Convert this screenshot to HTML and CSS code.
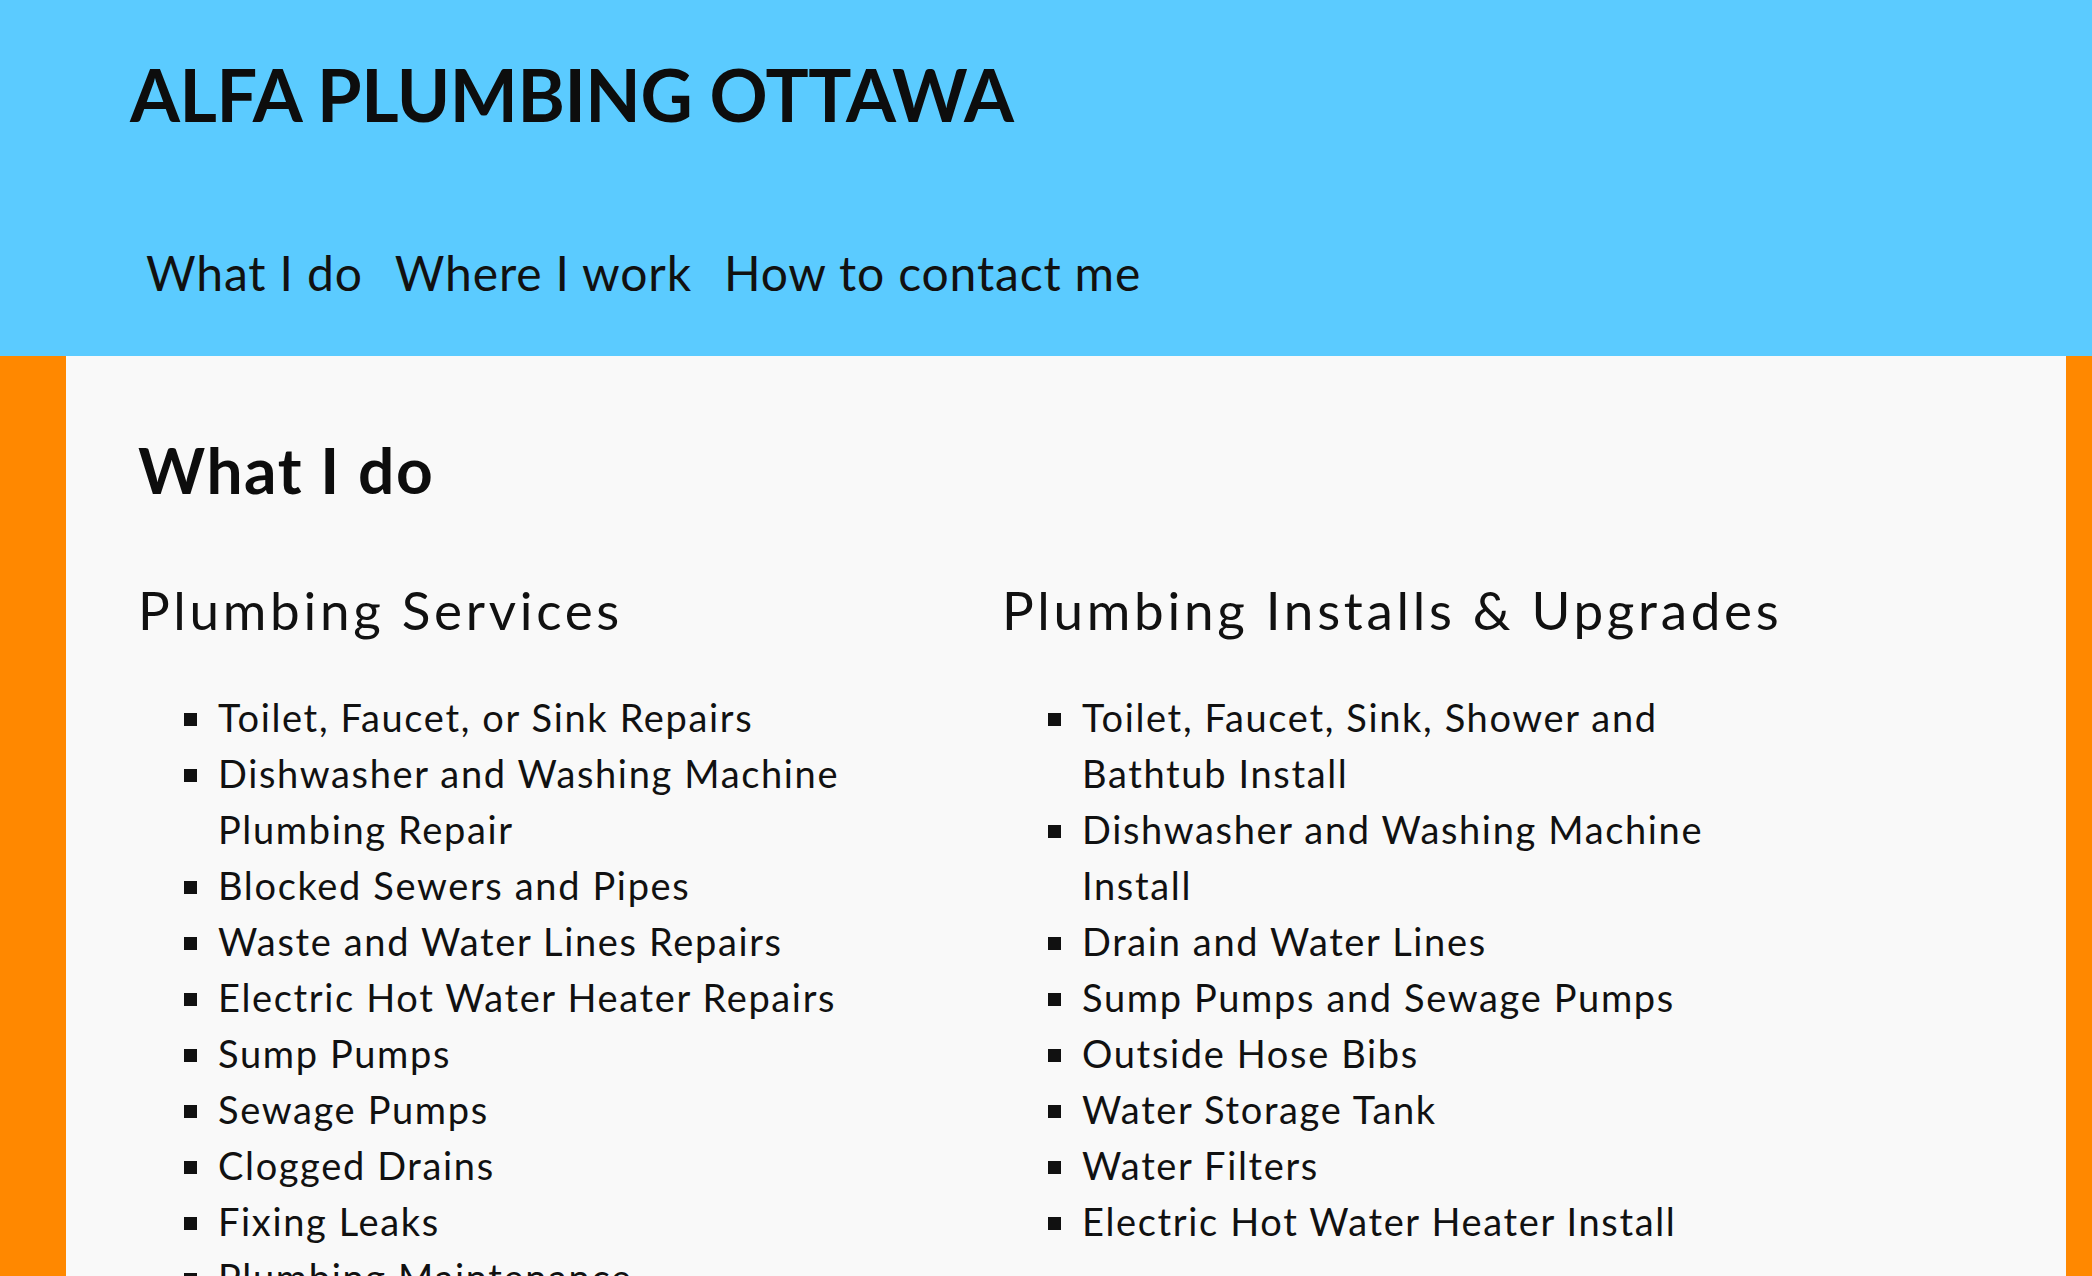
FILE: index.html
```html
<!DOCTYPE html>
<html lang="en">
<head>
<meta charset="utf-8">
<title>Alfa Plumbing Ottawa</title>
<link rel="stylesheet" href="styles.css">
</head>
<body>
<header class="site-header">
  <h1 class="site-title">ALFA PLUMBING OTTAWA</h1>
  <nav class="site-nav">
    <a class="nav-link" href="#what">What I do</a>
    <a class="nav-link" href="#where">Where I work</a>
    <a class="nav-link" href="#contact">How to contact me</a>
  </nav>
</header>
<main class="content">
  <section class="section" id="what">
    <h2 class="section-title">What I do</h2>
    <div class="columns">
      <div class="col">
        <h3 class="col-title">Plumbing Services</h3>
        <ul class="list">
          <li>Toilet, Faucet, or Sink Repairs</li>
          <li>Dishwasher and Washing Machine Plumbing Repair</li>
          <li>Blocked Sewers and Pipes</li>
          <li>Waste and Water Lines Repairs</li>
          <li>Electric Hot Water Heater Repairs</li>
          <li>Sump Pumps</li>
          <li>Sewage Pumps</li>
          <li>Clogged Drains</li>
          <li>Fixing Leaks</li>
          <li>Plumbing Maintenance</li>
        </ul>
      </div>
      <div class="col">
        <h3 class="col-title">Plumbing Installs &amp; Upgrades</h3>
        <ul class="list">
          <li>Toilet, Faucet, Sink, Shower and Bathtub Install</li>
          <li>Dishwasher and Washing Machine Install</li>
          <li>Drain and Water Lines</li>
          <li>Sump Pumps and Sewage Pumps</li>
          <li>Outside Hose Bibs</li>
          <li>Water Storage Tank</li>
          <li>Water Filters</li>
          <li>Electric Hot Water Heater Install</li>
        </ul>
      </div>
    </div>
  </section>
</main>
</body>
</html>
```
FILE: styles.css
```css
html, body {
  margin: 0;
  padding: 0;
}
body {
  background: #ff8800;
  font-family: Lato, "Open Sans", sans-serif;
  color: #111;
}
.site-header {
  background: #5bcbff;
  height: 356px;
  box-sizing: border-box;
  padding: 50px 0 0 130px;
}
.site-title {
  margin: 0;
  font-size: 72px;
  line-height: 88px;
  font-weight: 700;
  letter-spacing: -0.4px;
}
.site-title,
.section-title {
  color: #0d0d0d;
}
.site-nav {
  display: flex;
  gap: 32px;
  margin: 105px 0 0 16px;
}
.nav-link {
  color: #111;
  text-decoration: none;
  font-size: 48px;
  line-height: 60px;
  letter-spacing: 0.85px;
}
.content {
  margin-left: 66px;
  width: 2000px;
  background: #f9f9f9;
  min-height: 920px;
  box-sizing: border-box;
  padding: 74px 0 40px 72px;
}
.section-title {
  margin: 0;
  font-size: 64px;
  line-height: 80px;
  font-weight: 700;
  letter-spacing: 1.6px;
}
.columns {
  display: flex;
  gap: 74px;
  margin-top: 68px;
}
.col {
  width: 790px;
}
.col-title {
  margin: 0;
  font-size: 53px;
  line-height: 64px;
  font-weight: 400;
  letter-spacing: 3.7px;
}
.list {
  margin: 47px 0 0;
  padding-left: 78px;
  list-style: square;
  font-size: 38px;
  line-height: 56px;
  letter-spacing: 1.65px;
}
.list li {
  padding-left: 2px;
}
```
